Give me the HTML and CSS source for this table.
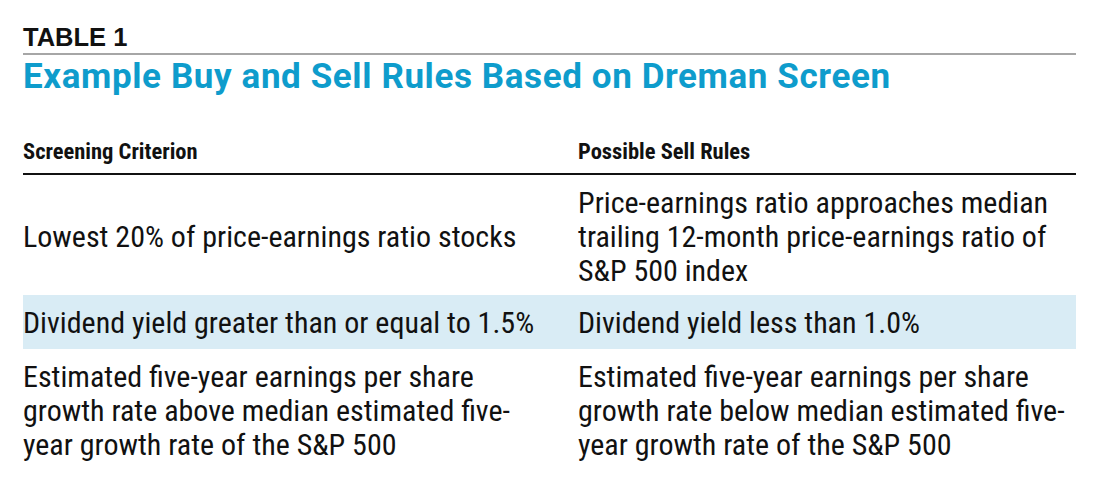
FILE: index.html
```html
<!DOCTYPE html>
<html lang="en">
<head>
<meta charset="utf-8">
<title>Table 1</title>
<link rel="stylesheet" href="styles.css">
</head>
<body>
<div class="page">
  <div class="label">TABLE 1</div>
  <h1 class="title">Example Buy and Sell Rules Based on Dreman Screen</h1>
  <div class="table">
    <div class="row head">
      <div class="cell">Screening Criterion</div>
      <div class="cell">Possible Sell Rules</div>
    </div>
    <div class="row">
      <div class="cell mid">Lowest 20% of price-earnings ratio stocks</div>
      <div class="cell">Price-earnings ratio approaches median trailing 12-month price-earnings ratio of S&amp;P 500 index</div>
    </div>
    <div class="row shaded">
      <div class="cell">Dividend yield greater than or equal to 1.5%</div>
      <div class="cell">Dividend yield less than 1.0%</div>
    </div>
    <div class="row">
      <div class="cell">Estimated five-year earnings per share growth rate above median estimated five-year growth rate of the S&amp;P 500</div>
      <div class="cell">Estimated five-year earnings per share growth rate below median estimated five-year growth rate of the S&amp;P 500</div>
    </div>
  </div>
</div>
</body>
</html>
```
FILE: styles.css
```css
html, body {
  margin: 0;
  padding: 0;
  background: #ffffff;
}

.page {
  width: 1053px;
  padding: 25px 0 0 23px;
}

.label {
  font-family: "Liberation Sans", Arial, sans-serif;
  font-weight: bold;
  font-size: 25.5px;
  line-height: 25px;
  color: #111111;
  padding-bottom: 3px;
  border-bottom: 2px solid #a6a6a6;
}

.title {
  margin: 2px 0 0;
  font-family: Roboto, sans-serif;
  font-weight: bold;
  font-size: 35px;
  letter-spacing: 0.6px;
  line-height: 40px;
  color: #0e9ccc;
}

.table {
  margin-top: 42px;
  font-family: "Roboto Condensed", Roboto, sans-serif;
  color: #111111;
}

.row {
  display: grid;
  grid-template-columns: 555px 1fr;
}

.cell {
  font-size: 30px;
  line-height: 34px;
  padding: 11px 0 8px 0;
}

.cell:first-child {
  padding-right: 20px;
}

.row:nth-child(2) .cell {
  padding-bottom: 7px;
}

.cell.mid {
  align-self: center;
}

.row.head {
  border-bottom: 2px solid #111111;
}

.row.head .cell {
  font-size: 22.5px;
  font-weight: bold;
  line-height: 24px;
  padding: 0 0 10px;
}

.row.shaded {
  background: #d9ecf5;
}

.row.shaded .cell {
  padding-bottom: 9px;
}
```
